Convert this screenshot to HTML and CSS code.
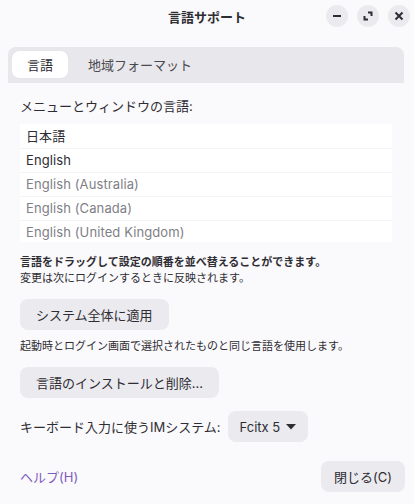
FILE: index.html
```html
<!DOCTYPE html>
<html lang="ja">
<head>
<meta charset="utf-8">
<link rel="stylesheet" href="styles.css">
</head>
<body>
<div class="window">
  <header class="titlebar">
    <div class="title">言語サポート</div>
    <div class="wbtns">
      <span class="wbtn"><svg width="10" height="10" viewBox="0 0 10 10"><rect x="1" y="4" width="8" height="2" fill="#2e2d33"/></svg></span>
      <span class="wbtn"><svg width="10" height="10" viewBox="0 0 10 10"><path d="M5 1.5H8.5V5M1.5 5V8.5H5" fill="none" stroke="#2e2d33" stroke-width="2"/></svg></span>
      <span class="wbtn"><svg width="10" height="10" viewBox="0 0 10 10"><path d="M1.5 1.5L8.5 8.5M8.5 1.5L1.5 8.5" fill="none" stroke="#2e2d33" stroke-width="2"/></svg></span>
    </div>
  </header>
  <nav class="tabs">
    <span class="tab active">言語</span>
    <span class="tab">地域フォーマット</span>
  </nav>
  <main class="content">
    <div class="label">メニューとウィンドウの言語:</div>
    <ul class="langlist">
      <li class="row first">日本語</li>
      <li class="row">English</li>
      <li class="row dim">English (Australia)</li>
      <li class="row dim">English (Canada)</li>
      <li class="row dim">English (United Kingdom)</li>
    </ul>
    <p class="note"><b>言語をドラッグして設定の順番を並べ替えることができます。</b><br>変更は次にログインするときに反映されます。</p>
    <button class="btn">システム全体に適用</button>
    <p class="note single">起動時とログイン画面で選択されたものと同じ言語を使用します。</p>
    <button class="btn">言語のインストールと削除...</button>
    <div class="imrow">
      <span>キーボード入力に使うIMシステム:</span>
      <button class="btn drop">Fcitx 5 <svg width="10" height="6" viewBox="0 0 10 6"><path d="M0 0H10L5 5.5Z" fill="#2e2d33"/></svg></button>
    </div>
  </main>
  <footer class="footer">
    <a class="help">ヘルプ(H)</a>
    <button class="btn close">閉じる(C)</button>
  </footer>
</div>
</body>
</html>
```
FILE: styles.css
```css
* { box-sizing: border-box; }
html, body { margin: 0; padding: 0; }
body {
  width: 414px;
  height: 504px;
  overflow: hidden;
  background: #faf9fb;
  font-family: Inter, "Noto Sans CJK JP", sans-serif;
  color: #2e2d33;
  font-size: 13px;
}
.window { width: 414px; height: 504px; display: flex; flex-direction: column; }
.titlebar {
  height: 34px;
  position: relative;
  display: flex;
  align-items: center;
  justify-content: center;
}
.title { font-weight: 700; font-size: 13px; margin-top: -1px; }
.wbtns {
  position: absolute;
  right: 4px;
  top: 5px;
  display: flex;
  gap: 9px;
}
.wbtn {
  width: 22px; height: 22px;
  border-radius: 50%;
  background: #ebeaee;
  display: flex; align-items: center; justify-content: center;
}
.tabs {
  margin: 13px 10px 0 8px;
  height: 36px;
  background: #e8e7eb;
  border-radius: 8px 8px 0 0;
  padding: 4px;
  display: flex;
  align-items: flex-start;
}
.tab {
  height: 27px;
  padding: 0 15px;
  display: flex; align-items: center;
  color: #4a4950;
  font-size: 13px;
}
.tab.active { background: #fff; border-radius: 7px; color: #2e2d33; box-shadow: 0 0 1px rgba(0,0,0,0.1); }
.tab + .tab { padding-left: 20px; }
.content { padding: 14px 22px 0 20px; display: flex; flex-direction: column; align-items: flex-start; }
.label { line-height: 18px; height: 18px; }
.langlist {
  list-style: none; margin: 9px 0 0; padding: 0;
  width: 372px; height: 118px; overflow: hidden;
  background: #fff;
}
.row {
  height: 24px; line-height: 23px;
  padding-left: 6px;
  border-bottom: 1px solid #f4f3f6;
  letter-spacing: 0.1px;
}
.row.first { height: 25px; line-height: 25px; }
.row.dim { color: #808086; }
.note { margin: 12px 0 0; font-size: 11px; line-height: 16px; }
.note b { font-weight: 700; }
.note.single { margin-top: 8px; }
.btn {
  font-family: Inter, "Noto Sans CJK JP", sans-serif;
  font-size: 13px;
  color: #2e2d33;
  background: #ebeaee;
  border: none;
  border-radius: 8px;
  height: 31px;
  padding: 0 16px;
  margin-top: 13px;
}
.imrow { display: flex; align-items: center; gap: 7px; margin-top: 13px; }
.imrow .btn { margin-top: 0; }
.btn.drop { padding: 0 12px; display: flex; align-items: center; gap: 6px; }
.footer {
  margin-top: auto;
  margin-bottom: 12px;
  padding: 0 9px 0 20px;
  display: flex; align-items: center; justify-content: space-between;
}
.help { color: #7d5cc0; font-size: 13px; }
.close { margin-top: 0; height: 31px; padding: 0 13px; }
```
